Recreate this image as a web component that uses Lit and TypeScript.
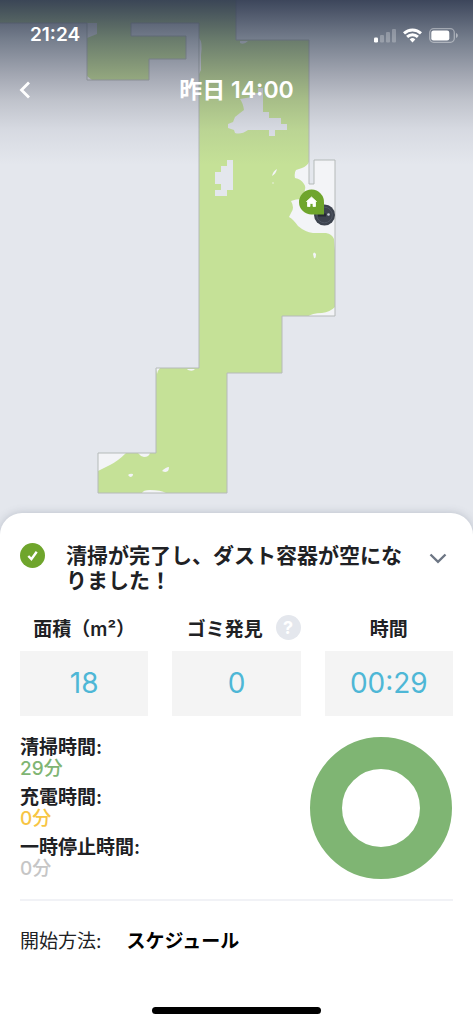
import { LitElement, html, css, svg } from "lit";
import { customElement, property } from "lit/decorators.js";

const FLOOR =
  "M-2 -2H236V40H309V184H314V160H335V316H282V373H227V493H98V453H156V368H199V23H131V36H186V59H149V80H87V23H-2Z";

@customElement("status-bar")
class StatusBar extends LitElement {
  static styles = css`
    :host { display: flex; align-items: center; justify-content: space-between; padding: 0 15px 0 30px; height: 24px; }
    .time { font-size: 19px; font-weight: 600; line-height: 24px; }
    .icons { display: flex; align-items: center; gap: 7px; }
    svg { display: block; }
  `;
  render() {
    return html`
      <span class="time">21:24</span>
      <span class="icons">
        <svg width="22" height="15" viewBox="0 0 22 15" fill="#fff" aria-label="signal">
          <rect x="0" y="9.500" width="4" height="5" rx="1.200" />
          <g fill-opacity=".25">
            <rect x="6" y="7" width="4" height="7.500" rx="1" />
            <rect x="12" y="4" width="4" height="10.500" rx="1" />
            <rect x="18" y="1" width="4" height="13.500" rx="1" />
          </g>
        </svg>
        <svg width="19" height="15" viewBox="0 0 19 15" fill="none" stroke="#fff" stroke-width="2.900" aria-label="wifi">
          <path d="M1 5.400a12.200 12.200 0 0 1 17 0" />
          <path d="M4.100 8.900a7.800 7.800 0 0 1 10.800 0" />
          <path d="M6.700 11.400a4 4 0 0 1 5.600 0L9.500 14.500Z" fill="#fff" stroke="none" />
        </svg>
        <svg width="29" height="15" viewBox="0 0 29 15" aria-label="battery">
          <rect x=".7" y=".7" width="24.600" height="13.600" rx="4" fill="none" stroke="#fff" stroke-opacity=".4" stroke-width="1.300" />
          <rect x="2.300" y="2.500" width="18" height="10" rx="2.200" fill="#fff" />
          <path d="M27 5c2.400.8 2.400 4.200 0 5Z" fill="#fff" fill-opacity=".45" />
        </svg>
      </span>
    `;
  }
}

@customElement("floor-map")
class FloorMap extends LitElement {
  static styles = css`
    :host { display: block; }
    svg { display: block; width: 100%; height: auto; }
  `;
  render() {
    return html`
      <svg viewBox="0 0 473 530" role="img" aria-label="map">
        <defs>
          <clipPath id="floor"><path d=${FLOOR} /></clipPath>
        </defs>
        <path d=${FLOOR} fill="#c5e197" />
        <g clip-path="url(#floor)" fill="#f3f4f7">
          ${svg`
          <path d="M309 162Q307 166 302 168L296 170Q294 173 295 178Q301 179 304 184Q307 188 303 194L301 199Q296 199 291 201Q295 208 291 213L289 217Q293 219 298 226Q305 232 313 233H326Q332 234 334 239L336 262V158H309Z" />
          <path d="M307 317Q312 313 322 313Q331 312 336 306V317Z" />
          <path d="M98 453H126Q118 461 110 465L98 471Z" />
          <path d="M138 453H150Q149 457 144 457Q140 456 138 453Z" />
          <path d="M142 493Q143 490 150 490Q161 490 166 493Z" />
          <path d="M162 471Q166 467 169 467Q169 474 162 471Z" />
          <path d="M128 475Q130 473 133 474Q133 477 130 477Z" />
          <path d="M187 369H195Q193 372 188 370Z" />
          <path d="M156 368H160Q158 370 157 374Z" />
          <path d="M272 176Q273 171 277 169Q276 174 272 176Z" />
          <path d="M313 254Q314 251 316 254Q316 259 314 258Z" />
          <circle cx="273" cy="183" r=".7" />
          <path d="M87 23H97V34L87 38ZM199 38Q203 42 201 55V70L199 74ZM87 76L92 80H87ZM240 41H248Q244 45 240 43Z" />
          `}
        </g>
        <g fill="#e4e7ed">
          <path d="M309 160H314V184H309Z" />
          <path d="M227 160H233V190H227V196H215V190H221V184H215V172H221V166H227Z" />
          <path d="M258 88H263V112H269V118H281V124H287V130H275V136H269V130H248Q241 135 235 133L234 130L228 128V124L233 122L235 117L240 113L244 110Q243 103 240 99L252 97V93H258Z" />
        </g>
        <path d=${FLOOR} fill="none" stroke="#b5bab9" stroke-width="1" />
        <circle cx="324.500" cy="215" r="10.500" fill="#3d434e" />
        <circle cx="324.500" cy="215" r="7.800" fill="none" stroke="#505764" stroke-width="1" />
        <path d="M318 215H326" stroke="#252a33" stroke-width="3" />
        <circle cx="328.500" cy="214.500" r="1.300" fill="#c9ced8" />
        <path d="M324 202.500V214.500H312A12.500 12.500 0 1 1 324 202.500Z" fill="#6fa52c" />
        <path d="M311.500 197L316.500 201.500H315.500V206.500H313V203.500H310V206.500H307.500V201.500H306.500Z" fill="#fff" stroke="#fff" stroke-width=".8" stroke-linejoin="round" />
      </svg>
    `;
  }
}

@customElement("stat-tile")
class StatTile extends LitElement {
  @property() label = "";
  @property() value = "";
  @property({ type: Boolean }) help = false;
  static styles = css`
    :host { display: flex; flex-direction: column; gap: 11px; }
    .label { display: flex; align-items: center; justify-content: center; height: 25px; font-size: 19px; font-weight: 600; white-space: nowrap; }
    .label.with-help { justify-content: flex-end; gap: 13px; }
    .help { width: 25px; height: 25px; padding: 0; border: 0; border-radius: 50%; background: #e4e7ed; color: #fff; font: 700 18px/25px Inter, sans-serif; text-align: center; }
    .value { padding: 15px 0; background: #f4f4f4; color: #4eb7d6; font-size: 28px; line-height: 35px; text-align: center; }
  `;
  render() {
    return html`
      <div class=${this.help ? "label with-help" : "label"}>
        <span>${this.label}</span>
        ${this.help ? html`<button class="help" aria-label="ヘルプ">?</button>` : ""}
      </div>
      <div class="value">${this.value}</div>
    `;
  }
}

@customElement("app-root")
class AppRoot extends LitElement {
  static styles = css`
    :host {
      display: flex; flex-direction: column; justify-content: space-between;
      position: relative; min-height: 100vh; background: #e4e7ed; color: #202124;
      font-family: Inter, "Noto Sans CJK JP", sans-serif;
    }
    floor-map { position: absolute; top: 0; left: 0; right: 0; }
    .top {
      position: relative; box-sizing: border-box; height: 165px; padding-top: 23px; color: #fff;
      background: linear-gradient(rgba(50, 60, 82, 0.94), rgba(50, 62, 82, 0.62) 40px, rgba(56, 62, 82, 0.38) 75px, rgba(60, 64, 82, 0.22) 100px, rgba(80, 84, 110, 0.09) 130px, rgba(80, 84, 110, 0));
    }
    .nav { display: grid; grid-template-columns: 48px 1fr 48px; align-items: center; margin-top: 27px; height: 32px; }
    .title { margin: 0; font-size: 23px; font-weight: 600; line-height: 32px; text-align: center; }
    .icon-button { display: flex; padding: 0; border: 0; background: none; }
    .back { padding-left: 19px; }
    .sheet {
      position: relative; padding: 30px 20px 10px; background: #fff;
      border-radius: 22px 22px 0 0; box-shadow: 0 0 8px rgba(90, 100, 120, 0.3);
    }
    .summary { display: grid; grid-template-columns: 25px 1fr 24px; column-gap: 21px; align-items: start; }
    .summary svg { display: block; }
    .message { margin: 0; font-size: 21px; font-weight: 600; line-height: 25px; word-break: break-all; }
    .toggle { padding: 10px 0 0; }
    .stats { display: grid; grid-template-columns: repeat(3, 1fr); gap: 24px; margin-top: 22px; }
    .breakdown { display: flex; align-items: center; justify-content: space-between; margin-top: 21px; padding-bottom: 20px; border-bottom: 2px solid #f1f2f6; }
    .times { display: grid; gap: 8px; margin: 0; font-size: 19px; font-weight: 600; line-height: 21px; }
    .times dd { margin: 0; font-weight: 500; }
    .clean { color: #7fb573; }
    .charge { color: #f7c544; }
    .pause { color: #c6c6c6; }
    .chart { display: block; margin-right: 1px; }
    .method { display: flex; gap: 25px; margin: 28px 0 0; font-size: 19px; line-height: 25px; }
    .method dd { margin: 0; color: #000; font-weight: 600; }
    .home { width: 169px; height: 7px; margin: 53px auto 0; border-radius: 4px; background: #000; }
  `;
  render() {
    return html`
      <floor-map></floor-map>
      <header class="top">
        <status-bar></status-bar>
        <div class="nav">
          <button class="icon-button back" aria-label="戻る">
            <svg width="12" height="18" viewBox="0 0 12 18" fill="none" stroke="#fff" stroke-width="2.800"><path d="M10 1.500L2.500 9L10 16.500" /></svg>
          </button>
          <h1 class="title">昨日 14:00</h1>
        </div>
      </header>
      <main class="sheet">
        <section class="summary">
          <svg width="25" height="25" viewBox="0 0 25 25"><circle cx="12.500" cy="12.500" r="12.500" fill="#6fa52c" /><path d="M8.300 13L11.400 16.200L16.700 8.800" fill="none" stroke="#fff" stroke-width="2.400" /></svg>
          <h2 class="message">清掃が完了し、ダスト容器が空になりました！</h2>
          <button class="icon-button toggle" aria-label="閉じる">
            <svg width="18" height="11" viewBox="0 0 18 11" fill="none" stroke="#6d7684" stroke-width="2.400"><path d="M1.500 1.500L9 8.800L16.500 1.500" /></svg>
          </button>
        </section>
        <section class="stats">
          <stat-tile label="面積（m²）" value="18"></stat-tile>
          <stat-tile label="ゴミ発見" value="0" help></stat-tile>
          <stat-tile label="時間" value="00:29"></stat-tile>
        </section>
        <section class="breakdown">
          <dl class="times">
            <div><dt>清掃時間:</dt><dd class="clean">29分</dd></div>
            <div><dt>充電時間:</dt><dd class="charge">0分</dd></div>
            <div><dt>一時停止時間:</dt><dd class="pause">0分</dd></div>
          </dl>
          <svg class="chart" width="142" height="142" viewBox="0 0 142 142"><circle cx="71" cy="71" r="55" fill="none" stroke="#7fb573" stroke-width="32" /></svg>
        </section>
        <dl class="method"><dt>開始方法:</dt><dd>スケジュール</dd></dl>
        <div class="home"></div>
      </main>
    `;
  }
}
